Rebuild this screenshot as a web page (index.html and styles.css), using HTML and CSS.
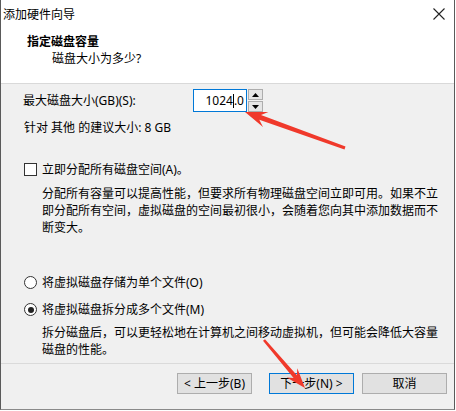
FILE: index.html
```html
<!DOCTYPE html>
<html lang="zh-CN">
<head>
<meta charset="utf-8">
<title>添加硬件向导</title>
<link rel="stylesheet" href="styles.css">
</head>
<body>
<div class="window">
  <div class="titlebar">
    <span class="title-text">添加硬件向导</span>
    <svg class="close" width="12" height="12" viewBox="0 0 12 12"><path d="M0.5 0.5 L11.5 11.5 M11.5 0.5 L0.5 11.5" stroke="#222" stroke-width="1.1" fill="none"/></svg>
  </div>
  <div class="header">
    <div class="h-title">指定磁盘容量</div>
    <div class="h-sub">磁盘大小为多少?</div>
  </div>
  <div class="content">
    <div class="size-row">
      <span class="label">最大磁盘大小(GB)(S):</span>
      <div class="spin">
        <div class="spin-input"><span>1024</span><span class="caret"></span><span>.0</span></div>
        <div class="spin-btns">
          <div class="spin-btn"><svg width="7" height="4" viewBox="0 0 7 4"><path d="M0 4 L3.5 0 L7 4 Z" fill="#000"/></svg></div>
          <div class="spin-btn"><svg width="7" height="4" viewBox="0 0 7 4"><path d="M0 0 L3.5 4 L7 0 Z" fill="#000"/></svg></div>
        </div>
      </div>
    </div>
    <div class="rec">针对 其他 的建议大小: 8 GB</div>
    <div class="option check-opt"><span class="checkbox"></span><span>立即分配所有磁盘空间(A)。</span></div>
    <p class="desc desc1">分配所有容量可以提高性能，但要求所有物理磁盘空间立即可用。如果不立即分配所有空间，虚拟磁盘的空间最初很小，会随着您向其中添加数据而不断变大。</p>
    <div class="option radio-opt1"><span class="radio"></span><span>将虚拟磁盘存储为单个文件(O)</span></div>
    <div class="option radio-opt2"><span class="radio checked"></span><span>将虚拟磁盘拆分成多个文件(M)</span></div>
    <p class="desc desc2">拆分磁盘后，可以更轻松地在计算机之间移动虚拟机，但可能会降低大容量磁盘的性能。</p>
  </div>
  <div class="footer">
    <div class="btn btn-back">&lt; 上一步(B)</div>
    <div class="btn btn-next">下一步(N) &gt;</div>
    <div class="btn btn-cancel">取消</div>
  </div>
</div>
<svg class="arrows" width="456" height="411" viewBox="0 0 456 411">
  <polygon points="245,112 268.4,112 261,115 345.5,146.6 344.5,149.4 259.3,119.8 263,127" fill="#f0392b"/>
  <polygon points="305,388 286.7,377.4 293.6,378 263,340.8 265,339.2 296.9,375.2 297.3,368.3" fill="#f0392b"/>
</svg>
</body>
</html>
```
FILE: styles.css
```css
html, body {
  margin: 0;
  padding: 0;
  background: #ffffff;
}
body {
  font-family: "Noto Sans", "Noto Sans CJK SC", sans-serif;
  font-size: 12px;
  color: #000;
  width: 456px;
  height: 411px;
  overflow: hidden;
  position: relative;
}
.window {
  width: 453px;
  height: 409px;
  border-left: 1px solid #5a5a5a;
  border-right: 1px solid #5a5a5a;
  border-bottom: 1px solid #8a8a8a;
  background: #f0f0f0;
  display: flex;
  flex-direction: column;
}
.titlebar {
  height: 28px;
  background: #fff;
  display: flex;
  align-items: center;
  justify-content: space-between;
  padding: 0 9px 0 2px;
  line-height: 17px;
}
.close {
  display: block;
}
.header {
  background: #fff;
  height: 50px;
  padding: 5px 0 0 26px;
  border-bottom: 1px solid #d9d9d9;
  line-height: 17px;
}
.h-title {
  font-weight: bold;
}
.h-sub {
  padding-left: 25px;
}
.content {
  flex: 1;
  padding: 5px 0 0 22px;
  line-height: 17px;
}
.size-row {
  display: flex;
  align-items: center;
  height: 23px;
}
.label {
  width: 170px;
}
.spin {
  display: flex;
  height: 23px;
}
.spin-input {
  width: 50px;
  height: 21px;
  border: 1px solid #0078d7;
  background: #fff;
  display: flex;
  justify-content: flex-end;
  align-items: center;
  padding-right: 2px;
  font-size: 12px;
}
.caret {
  display: inline-block;
  width: 1px;
  height: 14px;
  background: #000;
}
.spin-btns {
  display: flex;
  flex-direction: column;
  margin-left: 1px;
  gap: 1px;
}
.spin-btn {
  width: 13px;
  height: 9px;
  border: 1px solid #adadad;
  background: #e5e5e5;
  display: flex;
  align-items: center;
  justify-content: center;
}
.spin-btn svg {
  display: block;
}
.rec {
  margin-top: 7px;
  padding-left: 1px;
}
.option {
  display: flex;
  align-items: center;
  gap: 5px;
  height: 17px;
  padding-left: 1px;
}
.check-opt {
  margin-top: 25px;
}
.checkbox {
  width: 11px;
  height: 11px;
  border: 1px solid #333;
  background: #fff;
}
.radio {
  width: 11px;
  height: 11px;
  border: 1px solid #333;
  border-radius: 50%;
  background: #fff;
  position: relative;
}
.radio.checked::after {
  content: "";
  position: absolute;
  left: 2.5px;
  top: 2.5px;
  width: 6px;
  height: 6px;
  border-radius: 50%;
  background: #222;
}
.desc {
  margin: 7px 0 0 19px;
  width: 400px;
  line-height: 17px;
}
.radio-opt1 {
  margin-top: 38px;
}
.radio-opt2 {
  margin-top: 10px;
}
.desc2 {
  margin-top: 6px;
}
.footer {
  height: 36px;
  border-top: 1px solid #dadada;
  display: flex;
  justify-content: flex-end;
  align-items: flex-start;
  padding: 9px 7px 0 0;
}
.btn {
  height: 19px;
  border: 1px solid #adadad;
  background: #e1e1e1;
  display: flex;
  align-items: center;
  justify-content: center;
  line-height: 17px;
}
.btn-back {
  width: 73px;
}
.btn-next {
  width: 83px;
  margin-left: 17px;
  border-color: #0078d7;
}
.btn-cancel {
  width: 83px;
  margin-left: 8px;
}
.arrows {
  position: absolute;
  left: 0;
  top: 0;
  pointer-events: none;
}
```
